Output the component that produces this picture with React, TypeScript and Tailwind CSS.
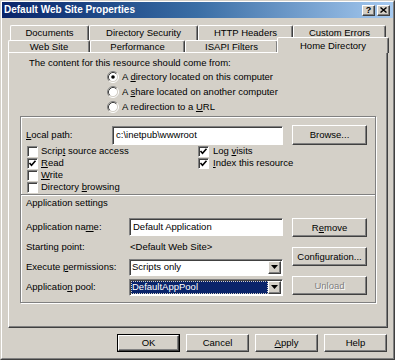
import React from "react";

const raised =
  "border border-t-white border-l-white border-r-[#404040] border-b-[#404040] shadow-[inset_-1px_-1px_0_#808080]";
const sunken =
  "border border-t-[#808080] border-l-[#808080] border-r-white border-b-white shadow-[inset_1px_1px_0_#404040]";

function Btn({
  children,
  w = "w-[75px]",
  h = "h-[19px]",
  disabled = false,
  def = false,
}: {
  children: React.ReactNode;
  w?: string;
  h?: string;
  disabled?: boolean;
  def?: boolean;
}) {
  if (def) {
    return (
      <div className={`${w} ${h} border border-black flex`}>
        <div className={`flex-1 ${raised} flex items-center justify-center`}>{children}</div>
      </div>
    );
  }
  return (
    <div
      className={`${w} ${h} ${raised} flex items-center justify-center ${
        disabled ? "text-[#808080] [text-shadow:1px_1px_0_#fff]" : ""
      }`}
    >
      {children}
    </div>
  );
}

function Radio({ checked }: { checked?: boolean }) {
  return (
    <svg width="12" height="12" viewBox="0 0 12 12" className="shrink-0">
      <circle cx="6" cy="6" r="4.5" fill="#fff" />
      <path d="M2.11 9.89 A5.5 5.5 0 0 1 9.89 2.11" stroke="#808080" fill="none" />
      <path d="M9.89 2.11 A5.5 5.5 0 0 1 2.11 9.89" stroke="#fff" fill="none" />
      <path d="M2.82 9.18 A4.5 4.5 0 0 1 9.18 2.82" stroke="#404040" fill="none" />
      <path d="M9.18 2.82 A4.5 4.5 0 0 1 2.82 9.18" stroke="#d4d0c8" fill="none" />
      {checked && <circle cx="6" cy="6" r="1.8" fill="#000" />}
    </svg>
  );
}

function Check({ checked }: { checked?: boolean }) {
  return (
    <div className={`w-[11px] h-[11px] bg-white ${sunken} shrink-0 flex items-center justify-center`}>
      {checked && (
        <svg width="9" height="9" viewBox="0 0 9 9">
          <path d="M1.5 4 L3.5 6.2 L7.5 1.8" stroke="#000" strokeWidth="1.6" fill="none" />
        </svg>
      )}
    </div>
  );
}

function Select({ value, selected }: { value: string; selected?: boolean }) {
  return (
    <div className={`w-[154px] h-[17px] bg-white ${sunken} flex items-stretch p-[1px]`}>
      <div
        className={`flex-1 flex items-center pl-[1px] ${
          selected ? "bg-[#0a246a] text-white outline-dotted outline-1 outline-[#d4d0c8] -outline-offset-1" : ""
        }`}
      >
        {value}
      </div>
      <div className={`w-[13px] bg-[#d4d0c8] ${raised} flex items-center justify-center`}>
        <svg width="7" height="4" viewBox="0 0 7 4">
          <path d="M0 0 H7 L3.5 4 Z" fill="#000" />
        </svg>
      </div>
    </div>
  );
}

function Tab({ w, children, selected }: { w: string; children: React.ReactNode; selected?: boolean }) {
  return (
    <div
      className={`${w} ${
        selected ? "h-[16px] -mb-[1px] relative z-10 -mx-[1px]" : "h-full"
      } bg-[#d4d0c8] border-t border-l border-t-white border-l-white border-r border-r-[#404040] shadow-[inset_-1px_0_0_#808080] rounded-t-[2px] flex items-center justify-center`}
    >
      {children}
    </div>
  );
}

export default function App() {
  return (
    <div className="w-[395px] h-[360px] bg-[#d4d0c8] font-['Liberation_Sans',Arial,sans-serif] text-[9.5px] leading-[12px] text-black border border-t-[#d4d0c8] border-l-[#d4d0c8] border-r-[#404040] border-b-[#404040] overflow-hidden">
      <div className="h-full border border-t-white border-l-white border-r-[#808080] border-b-[#808080] flex flex-col">
        {/* title bar */}
        <div className="h-[16px] bg-linear-to-r from-[#0a246a] via-[#3a6ea5] to-[#a6caf0] flex items-center pl-[2px] pr-[3px]">
          <div className="flex-1 text-white font-bold text-[10px]">Default Web Site Properties</div>
          <div className="flex gap-[2px]">
            <div className={`w-[13px] h-[11px] bg-[#d4d0c8] ${raised} flex items-center justify-center font-bold text-[9px] leading-none`}>
              ?
            </div>
            <div className={`w-[13px] h-[11px] bg-[#d4d0c8] ${raised} flex items-center justify-center`}>
              <svg width="7" height="6" viewBox="0 0 7 6">
                <path d="M0.5 0.5 L6.5 5.5 M6.5 0.5 L0.5 5.5" stroke="#000" strokeWidth="1.4" />
              </svg>
            </div>
          </div>
        </div>

        {/* tabs */}
        <div className="mt-[7px] flex flex-col">
          <div className="flex h-[15px] ml-[8px]">
            <Tab w="w-[79px]">Documents</Tab>
            <Tab w="w-[109px]">Directory Security</Tab>
            <Tab w="w-[95px]">HTTP Headers</Tab>
            <Tab w="w-[93px]">Custom Errors</Tab>
          </div>
          <div className="flex h-[12px] ml-[6px] items-end">
            <Tab w="w-[82px]">Web Site</Tab>
            <Tab w="w-[95px]">Performance</Tab>
            <Tab w="w-[93px]">ISAPI Filters</Tab>
            <Tab w="w-[112px]" selected>
              Home Directory
            </Tab>
          </div>
        </div>

        {/* panel */}
        <div className="ml-[6px] w-[380px] h-[276px] border border-t-white border-l-white border-r-[#404040] border-b-[#404040] shadow-[inset_-1px_-1px_0_#808080] flex flex-col">
          <div className="pt-[4px] pl-[20px] h-[16px]">The content for this resource should come from:</div>
          <div className="pl-[98px] flex flex-col">
            <div className="h-[15px] flex items-center gap-[3px]">
              <Radio checked />
              <span>
                A <u>d</u>irectory located on this computer
              </span>
            </div>
            <div className="h-[15px] flex items-center gap-[3px]">
              <Radio />
              <span>
                A <u>s</u>hare located on another computer
              </span>
            </div>
            <div className="h-[15px] flex items-center gap-[3px]">
              <Radio />
              <span>
                A redirection to a <u>U</u>RL
              </span>
            </div>
          </div>

          {/* group box */}
          <div className="mt-[2px] mx-[11px] border border-[#808080] shadow-[inset_1px_1px_0_#fff,1px_1px_0_#fff] pt-[8px] pl-[5px] pr-[8px] pb-[5px] flex flex-col">
            <div className="h-[20px] flex items-center">
              <div className="w-[86px]">
                <u>L</u>ocal path:
              </div>
              <div className={`w-[171px] h-[19px] bg-white ${sunken} flex items-center pl-[3px]`}>c:\inetpub\wwwroot</div>
              <div className="ml-[9px]">
                <Btn h="h-[20px]">Browse...</Btn>
              </div>
            </div>
            <div className="flex ml-[1px]">
              <div className="w-[171px] flex flex-col">
                <div className="h-[12px] flex items-center gap-[3px]">
                  <Check />
                  <span>
                    Scrip<u>t</u> source access
                  </span>
                </div>
                <div className="h-[12px] flex items-center gap-[3px]">
                  <Check checked />
                  <span>
                    <u>R</u>ead
                  </span>
                </div>
                <div className="h-[12px] flex items-center gap-[3px]">
                  <Check />
                  <span>
                    <u>W</u>rite
                  </span>
                </div>
                <div className="h-[12px] flex items-center gap-[3px]">
                  <Check />
                  <span>
                    Directory <u>b</u>rowsing
                  </span>
                </div>
              </div>
              <div className="flex flex-col">
                <div className="h-[12px] flex items-center gap-[4px]">
                  <Check checked />
                  <span>
                    Log <u>v</u>isits
                  </span>
                </div>
                <div className="h-[12px] flex items-center gap-[4px]">
                  <Check checked />
                  <span>
                    <u>I</u>ndex this resource
                  </span>
                </div>
              </div>
            </div>
            <div className="-ml-[5px] -mr-[8px] mt-[1px] h-[2px] border-t border-t-[#808080] border-b border-b-white" />
            <div className="mt-[1px] h-[12px]">Application settings</div>
            <div className="mt-[8px] flex">
              <div className="flex flex-col">
                <div className="h-[20px] flex items-center">
                  <div className="w-[103px]">
                    Application na<u>m</u>e:
                  </div>
                  <div className={`w-[154px] h-[18px] bg-white ${sunken} flex items-center pl-[3px]`}>Default Application</div>
                </div>
                <div className="h-[20px] flex items-center">
                  <div className="w-[103px]">Starting point:</div>
                  <div className="pl-[1px]">&lt;Default Web Site&gt;</div>
                </div>
                <div className="h-[20px] flex items-center">
                  <div className="w-[103px]">
                    Execute <u>p</u>ermissions:
                  </div>
                  <Select value="Scripts only" />
                </div>
                <div className="h-[20px] flex items-center">
                  <div className="w-[103px]">
                    Applicatio<u>n</u> pool:
                  </div>
                  <Select value="DefaultAppPool" selected />
                </div>
              </div>
              <div className="ml-[9px] pt-[1px] flex flex-col gap-[10px]">
                <Btn>
                  R<u>e</u>move
                </Btn>
                <Btn>
                  Confi<u>g</u>uration...
                </Btn>
                <Btn disabled>Unload</Btn>
              </div>
            </div>
          </div>
        </div>

        {/* bottom buttons */}
        <div className="mt-[6px] pr-[6px] flex justify-end gap-[6px]">
          <Btn w="w-[63px]" h="h-[18px]" def>
            OK
          </Btn>
          <Btn w="w-[63px]" h="h-[18px]">
            Cancel
          </Btn>
          <Btn w="w-[63px]" h="h-[18px]">
            <span>
              <u>A</u>pply
            </span>
          </Btn>
          <Btn w="w-[63px]" h="h-[18px]">
            Help
          </Btn>
        </div>
      </div>
    </div>
  );
}
